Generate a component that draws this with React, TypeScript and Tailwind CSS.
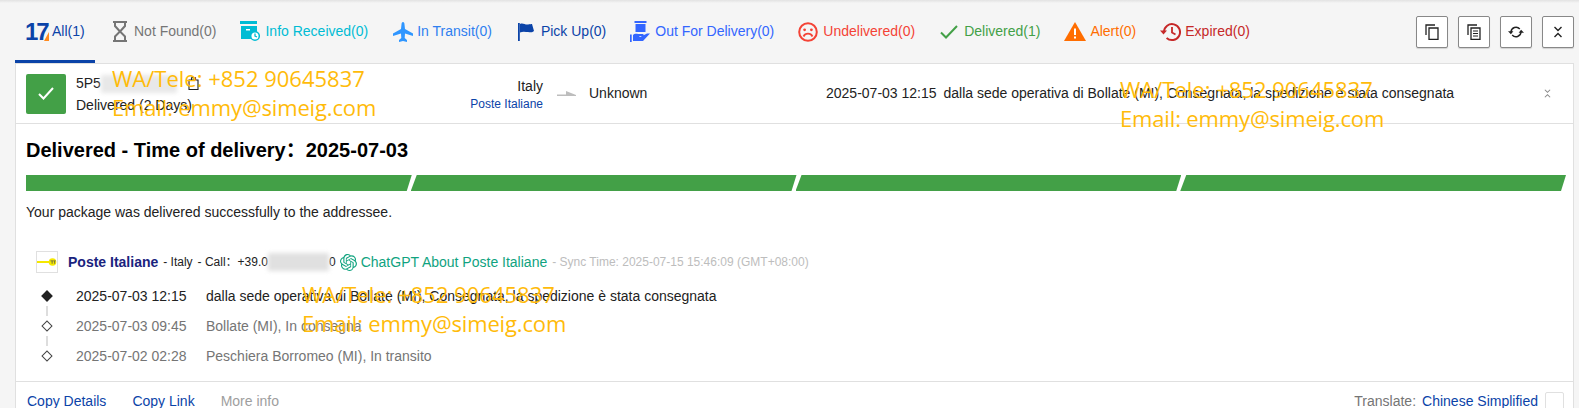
import type { ReactNode } from 'react';
import { SiOpenai } from 'react-icons/si';

const Hourglass = () => (
    <svg width="14" height="21" viewBox="0 0 14 21" fill="none" stroke="#757575" strokeWidth="2">
        <path d="M0 1h14M0 20h14" />
        <path d="M2 1v4l5 5.500-5 5V20M12 1v4l-5 5.500 5 5V20" />
    </svg>
);

const InfoBox = () => (
    <svg width="20" height="21" viewBox="0 0 20 21">
        <path d="M0 0h17v3H0z" fill="#00bcd4" />
        <path d="M1 5h16v6a6 6 0 0 0-6 7H1z" fill="#00bcd4" />
        <path d="M6 8h4v1.500H6z" fill="#fff" />
        <circle cx="15" cy="15" r="4.300" fill="#fff" stroke="#00bcd4" strokeWidth="1.500" />
        <path d="M15 12.500V15l2 1" fill="none" stroke="#00bcd4" strokeWidth="1.300" />
    </svg>
);

const Plane = () => (
    <svg width="20" height="20" viewBox="0 0 20 20" fill="#2f96ff">
        <path d="M8.600 1.500C8.900.500 9.500 0 10 0s1.100.500 1.400 1.500L12 7l8 4.500V14l-8-2.500-.3 4.500 2.300 2v2l-4-1-4 1v-2l2.300-2-.3-4.500L0 14v-2.500L8 7z" />
    </svg>
);

const Flag = () => (
    <svg width="16" height="18" viewBox="0 0 16 18">
        <path d="M0 0h1.800v18H0z" fill="#0b43a8" />
        <path d="M2 1c3-1.500 5 1 8 .5 2-.3 3-.5 4-.5l2 7c-2 2-4 1-6 1s-5-1-8 .5z" fill="#0b43a8" />
    </svg>
);

const OutDelivery = () => (
    <svg width="20" height="21" viewBox="0 0 20 21" fill="#3366ff">
        <path d="M4.500 0h12v2h-12z" />
        <path d="M5.500 3h10v8h-10z" />
        <path d="M0 13.500h1.700V21H0z" />
        <path d="M3 14c1-1.200 3-1.500 5-1h5c1 .2 1 2-.5 2H9l1 1 7-3.500h3L13 20H3z" />
    </svg>
);

const Sad = () => (
    <svg width="20" height="20" viewBox="0 0 20 20" fill="none">
        <circle cx="10" cy="10" r="8.800" stroke="#f44336" strokeWidth="2" />
        <circle cx="6.600" cy="7.800" r="1.400" fill="#f44336" />
        <circle cx="13.400" cy="7.800" r="1.400" fill="#f44336" />
        <path d="M5.500 14.500c1-2 2.500-2.800 4.500-2.800s3.500.800 4.500 2.800" stroke="#f44336" strokeWidth="1.800" />
    </svg>
);

const Tick = () => (
    <svg width="18" height="14" viewBox="0 0 18 14" fill="none">
        <path d="M1 7.500 6 12.500 17 1" stroke="#43a047" strokeWidth="2" />
    </svg>
);

const Warn = () => (
    <svg width="22" height="19" viewBox="0 0 22 19">
        <path d="M11 0 22 19H0z" fill="#ff6d00" />
        <path d="M10 6.500h2v6.500h-2zM10 14.500h2v2h-2z" fill="#fff" />
    </svg>
);

const Expired = () => (
    <svg width="21" height="20" viewBox="0 0 21 20" fill="none" stroke="#c62828">
        <path d="M4 10a8 8 0 1 1 2.600 6" strokeWidth="2" />
        <path d="M0 8.500h7L3.500 12.500z" fill="#c62828" stroke="none" />
        <path d="M12 5v5.500l3.500 2" strokeWidth="1.800" />
    </svg>
);

const Chevrons = ({ color = '#222', size = 12 }: { color?: string; size?: number }) => (
    <svg width={size} height={size} viewBox="0 0 12 12" fill="none" stroke={color} strokeWidth="1.400">
        <path d="M2.500 1 6 4.500 9.500 1M2.500 11 6 7.500 9.500 11" />
    </svg>
);

const CopyOne = () => (
    <svg width="14" height="16" viewBox="0 0 14 16" fill="none" stroke="#222" strokeWidth="1.300">
        <path d="M1 11V1h9" />
        <path d="M4 4h9v11.300H4z" />
    </svg>
);

const CopyLines = () => (
    <svg width="14" height="16" viewBox="0 0 14 16" fill="none" stroke="#222" strokeWidth="1.300">
        <path d="M1 11V1h9" />
        <path d="M4 4h9v11.300H4z" />
        <path d="M6 7h5M6 9.500h5M6 12h5" strokeWidth="1.100" />
    </svg>
);

const Sync = () => (
    <svg width="16" height="14" viewBox="0 0 16 14" fill="none" stroke="#222" strokeWidth="1.400">
        <path d="M3 7a5 5 0 0 1 8.800-3" />
        <path d="M13 7a5 5 0 0 1-8.800 3" />
        <path d="M0 6.300h5.400L2.900 9.300zM16 7.700h-5.400l2.500-3z" fill="#222" stroke="none" />
    </svg>
);

const tabs: { icon: ReactNode; label: string; color: string; gap: string; pad: string }[] = [
    { icon: <Hourglass />, label: 'Not Found(0)', color: 'text-[#757575]', gap: 'gap-[7px]', pad: 'ml-[18px]' },
    { icon: <InfoBox />, label: 'Info Received(0)', color: 'text-[#00bcd4]', gap: 'gap-[5px]', pad: 'ml-6' },
    { icon: <Plane />, label: 'In Transit(0)', color: 'text-[#2f7ff0]', gap: 'gap-1', pad: 'ml-[25px]' },
    { icon: <Flag />, label: 'Pick Up(0)', color: 'text-[#0b43a8]', gap: 'gap-[7px]', pad: 'ml-[26px]' },
    { icon: <OutDelivery />, label: 'Out For Delivery(0)', color: 'text-[#3366ff]', gap: 'gap-[5px]', pad: 'ml-6' },
    { icon: <Sad />, label: 'Undelivered(0)', color: 'text-[#f44336]', gap: 'gap-[5px]', pad: 'ml-6' },
    { icon: <Tick />, label: 'Delivered(1)', color: 'text-[#43a047]', gap: 'gap-[6px]', pad: 'ml-[25px]' },
    { icon: <Warn />, label: 'Alert(0)', color: 'text-[#ff6d00]', gap: 'gap-1', pad: 'ml-6' },
    { icon: <Expired />, label: 'Expired(0)', color: 'text-[#c62828]', gap: 'gap-1', pad: 'ml-6' },
];

const events = [
    { time: '2025-07-03 12:15', text: 'dalla sede operativa di Bollate (MI), Consegnata, la spedizione è stata consegnata', current: true },
    { time: '2025-07-03 09:45', text: 'Bollate (MI), In consegna', current: false },
    { time: '2025-07-02 02:28', text: 'Peschiera Borromeo (MI), In transito', current: false },
];

const Watermark = ({ className }: { className: string }) => (
    <div className={`absolute text-[22px] leading-[29px] text-[#ffbb0a] font-['Open_Sans',sans-serif] whitespace-nowrap pointer-events-none ${className}`}>
        <div>WA/Tele: +852 90645837</div>
        <div className="tracking-[-0.15px]">Email: emmy@simeig.com</div>
    </div>
);

export default function App() {
    return (
        <div className="relative h-[408px] overflow-hidden bg-[#f5f5f5] font-['Liberation_Sans','Noto_Sans_CJK_SC',sans-serif] text-[14px] text-[#222]">
            <div className="h-[3px] bg-gradient-to-b from-[#e2e2e2] to-[#f5f5f5]" />
            <div className="flex h-[60px] items-center pb-[3px] pl-[15px] pr-[5px]">
                <div className="-mb-[3px] flex w-[80px] items-center self-stretch border-b-[3px] border-[#0b43a8] pl-[10px]">
                    <span className="relative w-[26px] text-[24px] font-bold leading-none tracking-[-2px] text-[#0b43a8]">
                        17
                        <span className="absolute bottom-[3px] right-[2px] h-0 w-0 border-b-[9px] border-l-[5px] border-b-[#ff8a1e] border-l-transparent" />
                    </span>
                    <span className="ml-px text-[#0b43a8]">All(1)</span>
                </div>
                {tabs.map(tab => (
                    <div key={tab.label} className={`flex items-center ${tab.gap} ${tab.pad}`}>
                        {tab.icon}
                        <span className={tab.color}>{tab.label}</span>
                    </div>
                ))}
                <div className="ml-auto flex gap-[10px]">
                    {[<CopyOne />, <CopyLines />, <Sync />, <Chevrons />].map((icon, i) => (
                        <button key={i} className="flex h-[32px] w-[32px] items-center justify-center rounded-[2px] border border-[#888] bg-white shadow-[0_1px_1px_rgba(0,0,0,0.15)]">
                            {icon}
                        </button>
                    ))}
                </div>
            </div>

            <div className="ml-[15px] mr-[5px] border-x border-t border-[#e0e0e0] bg-white">
                <div className="flex h-[60px] items-center border-b border-[#e0e0e0]">
                    <div className="ml-[10px] flex h-[40px] w-[40px] items-center justify-center rounded-[2px] bg-[#43a047]">
                        <svg width="16" height="13" viewBox="0 0 16 13" fill="none" stroke="#fff" strokeWidth="2">
                            <path d="M1 7l4.500 4.500L15 1" />
                        </svg>
                    </div>
                    <div className="ml-[10px] w-[150px]">
                        <div className="flex h-[20px] items-center">
                            5P5
                            <span className="h-[18px] w-[76px] bg-[#e8e8e8] blur-[2px]" />
                            <svg className="ml-[11px]" width="11" height="13" viewBox="0 0 11 13" fill="none" stroke="#222" strokeWidth="1.100">
                                <path d="M1 3h9v9.500H1zM3.500 3V.800h4V3" />
                            </svg>
                        </div>
                        <div className="mt-[2px] leading-[18px]">Delivered (2 Days)</div>
                    </div>
                    <div className="w-[317px] text-right">
                        <div className="leading-[20px]">Italy</div>
                        <div className="text-[12px] leading-[16px] text-[#0b43a8]">Poste Italiane</div>
                    </div>
                    <svg className="ml-[14px]" width="19" height="6" viewBox="0 0 19 6">
                        <path d="M0 3.500h9V0l10 4v1H0z" fill="#bdbdbd" />
                    </svg>
                    <span className="ml-[13px] w-[237px]">Unknown</span>
                    <span>2025-07-03 12:15</span>
                    <span className="ml-[7px]">dalla sede operativa di Bollate (MI), Consegnata, la spedizione è stata consegnata</span>
                    <span className="ml-auto mr-[21px] flex"><Chevrons color="#888" size={9} /></span>
                </div>

                <div className="pl-[10px] pr-[7px]">
                    <h2 className="mt-[14px] text-[20px] font-bold leading-[24px] text-black">Delivered - Time of delivery：2025-07-03</h2>
                    <div className="mt-[13px] flex">
                        {[0, 1, 2, 3].map(i => (
                            <div
                                key={i}
                                className={`h-4 flex-1 bg-[#43a047] ${i === 0 ? '[clip-path:polygon(0_0,100%_0,calc(100%-5px)_100%,0_100%)]' : '-ml-px [clip-path:polygon(6px_0,100%_0,calc(100%-5px)_100%,0_100%)]'}`}
                            />
                        ))}
                    </div>
                    <p className="mt-[13px] leading-[16px]">Your package was delivered successfully to the addressee.</p>
                    <div className="mt-[31px] flex h-[22px] items-center pl-[10px] text-[12px]">
                        <div className="flex h-[22px] w-[22px] items-center justify-center border border-[#e0e0e0]">
                            <svg width="20" height="8" viewBox="0 0 20 8">
                                <path d="M0 3h13v2H0z" fill="#f5e800" />
                                <circle cx="15.500" cy="4" r="3.800" fill="#f5e800" />
                                <path d="M13.500 2.500h3v.8h-1v2.500h-.8V3.300h-1.200zM16.700 2.500h2v.8h-.6v2.500h-.8V3.300h-.6z" fill="#555" />
                            </svg>
                        </div>
                        <span className="ml-[10px] text-[14px] font-bold text-[#1a237e]">Poste Italiane</span>
                        <span className="ml-[5px]">- Italy</span>
                        <span className="ml-[5px]">- Call：+39.0</span>
                        <span className="h-[18px] w-[61px] bg-[#e0e0e0] blur-[2px]" />
                        <span>0</span>
                        <SiOpenai className="ml-1 text-[17px] text-[#10a37f]" />
                        <span className="ml-1 text-[14px] text-[#10a37f]">ChatGPT About Poste Italiane</span>
                        <span className="ml-[5px] text-[#bdbdbd]">- Sync Time: 2025-07-15 15:46:09 (GMT+08:00)</span>
                    </div>
                    <div className="mt-[8px] pl-[15px]">
                        {events.map((ev, i) => (
                            <div key={ev.time} className={`relative flex h-[30px] items-center ${ev.current ? 'text-[#222]' : 'text-[#757575]'}`}>
                                {i > 0 && <span className="absolute left-[5px] top-[-5px] h-[10px] w-[2px] bg-[#ddd]" />}
                                <span className={`ml-[2px] h-[8px] w-[8px] rotate-45 border ${ev.current ? 'border-[#222] bg-[#222]' : 'border-[#444] bg-white'}`} />
                                <span className="ml-[25px] w-[130px]">{ev.time}</span>
                                <span>{ev.text}</span>
                            </div>
                        ))}
                    </div>
                </div>

                <div className="mt-[10px] flex h-[40px] items-center border-t border-[#e0e0e0] pl-[11px] pr-[9px]">
                    <span className="text-[#0b43a8]">Copy Details</span>
                    <span className="ml-[26px] text-[#0b43a8]">Copy Link</span>
                    <span className="ml-[26px] text-[#9e9e9e]">More info</span>
                    <span className="ml-auto text-[#757575]">Translate:</span>
                    <span className="ml-[6px] text-[#0b43a8]">Chinese Simplified</span>
                    <span className="ml-[7px] h-[20px] w-[19px] rounded-[2px] border border-[#e0e0e0]" />
                </div>
            </div>

            <Watermark className="left-[112px] top-[64px]" />
            <Watermark className="left-[1120px] top-[75px]" />
            <Watermark className="left-[302px] top-[280px]" />
        </div>
    );
}
